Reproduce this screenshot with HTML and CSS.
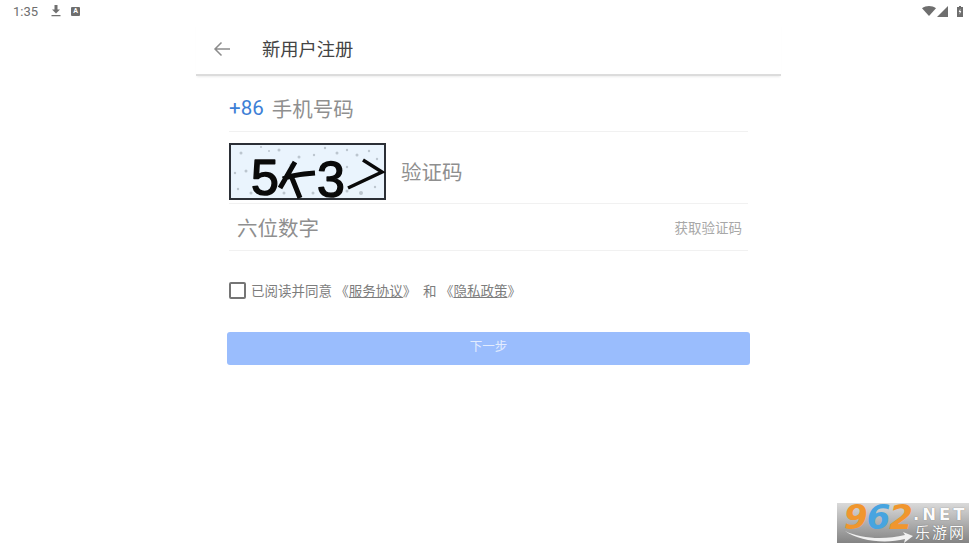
FILE: index.html
```html
<!doctype html>
<html lang="zh">

<head>
    <meta charset="UTF-8">
    <title>新用户注册</title>
    <link rel="stylesheet" href="styles.css">
</head>

<body>
    <div class="status-bar">
        <div class="status-left">
            <span class="clock">1:35</span>
            <svg class="st-download" width="10" height="12" viewBox="0 0 10 12"><path d="M3.500 0h3v4.500h2.500L5 8.500 1 4.500h2.500zM0.500 10h9v1.300h-9z" fill="#707070"/></svg>
            <span class="st-a">A</span>
        </div>
        <div class="status-right">
            <svg width="14" height="10" viewBox="0 0 14 10"><path d="M0 2.200C2 .7 4.500 0 7 0s5 .7 7 2.200L7 10z" fill="#6e6e6e"/></svg>
            <svg width="11" height="11" viewBox="0 0 11 11"><path d="M11 0v11H0z" fill="#6e6e6e"/></svg>
            <svg class="st-batt" width="6" height="11" viewBox="0 0 6 11"><path d="M2 0h2v1h2v10H0V1h2z" fill="#6e6e6e"/><path d="M3.400 2.500L1.700 6h1.100l-.3 2.700L4.300 5H3.200z" fill="#fff"/></svg>
        </div>
    </div>

    <div class="panel">
        <div class="toolbar">
            <svg class="back" width="18" height="16" viewBox="0 0 18 16"><path d="M17 8H2M8.500 1.500L2 8l6.500 6.500" fill="none" stroke="#8c8c8c" stroke-width="1.500"/></svg>
            <span class="title">新用户注册</span>
        </div>

        <div class="form">
            <div class="row row-phone">
                <span class="code">+86</span>
                <span class="hint">手机号码</span>
            </div>
            <div class="row row-captcha">
                <svg class="captcha" width="157" height="57" viewBox="0 0 157 57">
                    <rect x="1" y="1" width="155" height="55" fill="#eaf4fd" stroke="#2b2f36" stroke-width="2"/>
                    <g fill="#bcc6cf">
                        <circle cx="12" cy="10" r="1.500"/><circle cx="17" cy="28" r="1.500"/><circle cx="40" cy="8" r="1"/>
                        <circle cx="50" cy="7" r="1.500"/><circle cx="62" cy="22" r="1.500"/><circle cx="70" cy="14" r="1.500"/>
                        <circle cx="85" cy="12" r="1.200"/><circle cx="108" cy="10" r="1.500"/><circle cx="118" cy="7" r="1.200"/>
                        <circle cx="128" cy="12" r="1.500"/><circle cx="140" cy="8" r="1.200"/><circle cx="118" cy="24" r="1.200"/>
                        <circle cx="6" cy="30" r="1.200"/><circle cx="118" cy="48" r="1.500"/><circle cx="132" cy="50" r="2"/>
                        <circle cx="22" cy="50" r="1.500"/><circle cx="146" cy="44" r="1.200"/><circle cx="84" cy="50" r="1.500"/>
                        <circle cx="55" cy="50" r="1.500"/><circle cx="100" cy="52" r="1.500"/><circle cx="9" cy="46" r="1.200"/>
                        <circle cx="32" cy="4" r="1"/><circle cx="96" cy="5" r="1.200"/><circle cx="148" cy="16" r="1.200"/>
                    </g>
                    <text class="cap-char" x="22" y="52">5</text>
                    <text class="cap-char" x="88" y="54">3</text>
                    <path d="M66 19L51 45M54 36C62 32 72 31 86 30M63 35L71 55" fill="none" stroke="#0a0a0a" stroke-width="5"/>
                    <path d="M134 17L153 29 119 45" fill="none" stroke="#0a0a0a" stroke-width="3.500"/>
                </svg>
                <span class="hint">验证码</span>
            </div>
            <div class="row row-sms">
                <span class="hint">六位数字</span>
                <span class="get-code">获取验证码</span>
            </div>
        </div>

        <div class="agree">
            <span class="checkbox"></span>
            <span class="agree-text">已阅读并同意 《<u>服务协议</u>》  和 《<u>隐私政策</u>》</span>
        </div>

        <div class="next-btn">下一步</div>
    </div>

    <div class="watermark">
        <svg class="wm-swoosh" width="70" height="14" viewBox="0 0 70 14"><path d="M0 1C16 9 40 10 60 5l-2-3 10 4-9 7 1-4C40 14 14 11 0 1z" fill="#f1f1f1"/></svg>
        <span class="wm-num"><b class="n-o">9</b><b class="n-b">6</b><b class="n-o">2</b></span>
        <span class="wm-net">.NET</span>
        <span class="wm-cn">乐游网</span>
    </div>
</body>

</html>
```

FILE: styles.css
```css
body {
    margin: 0;
    background-color: #fff;
    color: #333;
    font-family: "Roboto", "Noto Sans CJK SC", sans-serif;
    overflow: hidden;
    height: 549px;
}

.status-bar {
    height: 22px;
    padding: 0 13px 2px 13px;
    display: flex;
    justify-content: space-between;
    align-items: center;
}

.status-left {
    display: flex;
    align-items: center;
}

.clock {
    font-size: 13px;
    color: #6e6e6e;
    width: 38px;
}

.st-download {
    margin-right: 10px;
}

.st-a {
    width: 9px;
    height: 9px;
    background-color: #6e6e6e;
    color: #fff;
    font-size: 7px;
    font-weight: bold;
    line-height: 9px;
    text-align: center;
    border-radius: 1px;
}

.status-right {
    display: flex;
    align-items: center;
    gap: 1px;
}

.st-batt {
    margin-left: 8px;
}

.panel {
    width: 585px;
    margin-left: 196px;
}

.toolbar {
    height: 47px;
    padding: 0 0 3px 17px;
    display: flex;
    align-items: center;
    border-bottom: 2px solid #dcdcdc;
    box-shadow: 0 2px 2px -1px rgba(0, 0, 0, .08);
}

.back {
    margin-right: 31px;
    margin-top: 2px;
}

.title {
    font-size: 18.300px;
    color: #444;
}

.form {
    margin: 0 33px;
}

.row {
    display: flex;
    align-items: center;
    border-bottom: 1px solid #f1f1f1;
}

.row-phone {
    height: 46px;
    padding-top: 9px;
}

.row-captcha {
    height: 64px;
    padding-top: 7px;
}

.row-sms {
    height: 46px;
    padding: 0 6px 0 8px;
    justify-content: space-between;
}

.code {
    color: #3d7fd6;
    font-size: 20.500px;
    margin-right: 8px;
}

.hint {
    font-size: 20.500px;
    color: #8f8f8f;
}

.captcha {
    margin-right: 15px;
    overflow: visible;
}

.get-code {
    font-size: 13.500px;
    color: #a8a8a8;
}

.agree {
    margin: 30px 0 0 33px;
    height: 18px;
    display: flex;
    align-items: center;
}

.checkbox {
    width: 13px;
    height: 13px;
    border: 2px solid #757575;
    border-radius: 2px;
    margin-right: 5px;
}

.agree-text {
    font-size: 13.500px;
    color: #7d7d7d;
    white-space: pre;
}

.next-btn {
    margin: 33px 31px 0;
    height: 33px;
    line-height: 29px;
    background-color: #9abdfd;
    border-radius: 3px;
    text-align: center;
    color: #e3ecfd;
    font-size: 12.500px;
}

.cap-char {
    font: 50px "Liberation Sans", sans-serif;
    fill: #0a0a0a;
    stroke: #0a0a0a;
    stroke-width: 1.500px;
    stroke-linejoin: round;
}

.watermark {
    position: absolute;
    left: 837px;
    top: 503px;
    width: 132px;
    height: 40px;
    background: linear-gradient(#dadada, #848484);
}

.wm-num {
    position: absolute;
    left: 7px;
    top: 0;
    font: italic 34px/28px "DejaVu Sans", sans-serif;
    letter-spacing: -1px;
}

.wm-num b {
    font-weight: bold;
}

.n-o {
    color: #f0962e;
}

.n-b {
    color: #47a4e0;
}

.wm-net {
    position: absolute;
    left: 76px;
    top: 2px;
    font: bold 16.500px/20px "DejaVu Sans", sans-serif;
    letter-spacing: 3px;
    color: #fbfbfb;
    text-shadow: 0 0 1px #666;
}

.wm-cn {
    position: absolute;
    left: 78px;
    top: 21px;
    font-size: 15px;
    line-height: 18px;
    letter-spacing: 2px;
    color: #fbfbfb;
    text-shadow: 0 0 1px #555;
}

.wm-swoosh {
    position: absolute;
    left: 8px;
    top: 27px;
}
```
